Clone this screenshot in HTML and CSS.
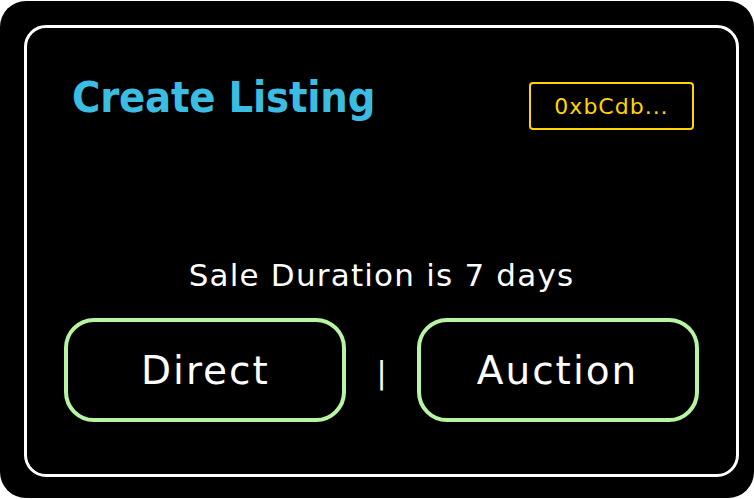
FILE: index.html
```html
<!DOCTYPE html>
<html lang="en">
<head>
<meta charset="utf-8">
<title>Create Listing</title>
<link rel="stylesheet" href="styles.css">
</head>
<body>
<div class="frame">
  <div class="card">
    <header class="card-header">
      <h1 class="title">Create Listing</h1>
      <div class="address">0xbCdb...</div>
    </header>
    <div class="spacer"></div>
    <p class="duration">Sale Duration is 7 days</p>
    <div class="choices">
      <button class="choice">Direct</button>
      <span class="divider">|</span>
      <button class="choice">Auction</button>
    </div>
  </div>
</div>
</body>
</html>
```

FILE: styles.css
```css
html, body {
  margin: 0;
  padding: 0;
  background: #ffffff;
}
body {
  width: 754px;
  height: 499px;
  font-family: "DejaVu Sans", sans-serif;
}
.frame {
  box-sizing: border-box;
  margin-top: 1px;
  width: 754px;
  height: 497px;
  background: #000000;
  border-radius: 26px;
  padding: 24px 15px 21px 24px;
  display: flex;
}
.card {
  flex: 1;
  min-width: 0;
  box-sizing: border-box;
  border: 3px solid #ffffff;
  border-radius: 22px;
  display: flex;
  flex-direction: column;
  padding: 48px 0 52px;
}
.card-header {
  display: flex;
  justify-content: space-between;
  align-items: flex-start;
  padding: 0 42px 0 45px;
}
.title {
  margin: 0;
  font-family: "DejaVu Sans Condensed", "DejaVu Sans", sans-serif;
  font-size: 43px;
  line-height: 43px;
  font-weight: 700;
  color: #3bbde2;
  letter-spacing: -0.2px;
}
.address {
  margin-top: 6px;
  box-sizing: border-box;
  width: 165px;
  height: 48px;
  border: 2px solid #ffd400;
  border-radius: 4px;
  color: #ffd400;
  font-size: 22px;
  display: flex;
  align-items: center;
  justify-content: center;
  letter-spacing: 1px;
}
.spacer {
  flex: 1;
}
.duration {
  margin: 0 0 27px;
  text-align: center;
  color: #ffffff;
  font-size: 31px;
  line-height: 31px;
  letter-spacing: 1.2px;
}
.choices {
  display: flex;
  justify-content: center;
  align-items: center;
  gap: 30px;
}
.choice {
  box-sizing: border-box;
  width: 282px;
  height: 104px;
  background: #000000;
  border: 4px solid #b8f5a2;
  border-radius: 30px;
  color: #ffffff;
  font-family: "DejaVu Sans", sans-serif;
  font-size: 39px;
  letter-spacing: 2px;
  padding: 0;
  cursor: pointer;
}
.divider {
  color: #ffffff;
  font-size: 30px;
  line-height: 30px;
  margin-top: 5px;
}
```
